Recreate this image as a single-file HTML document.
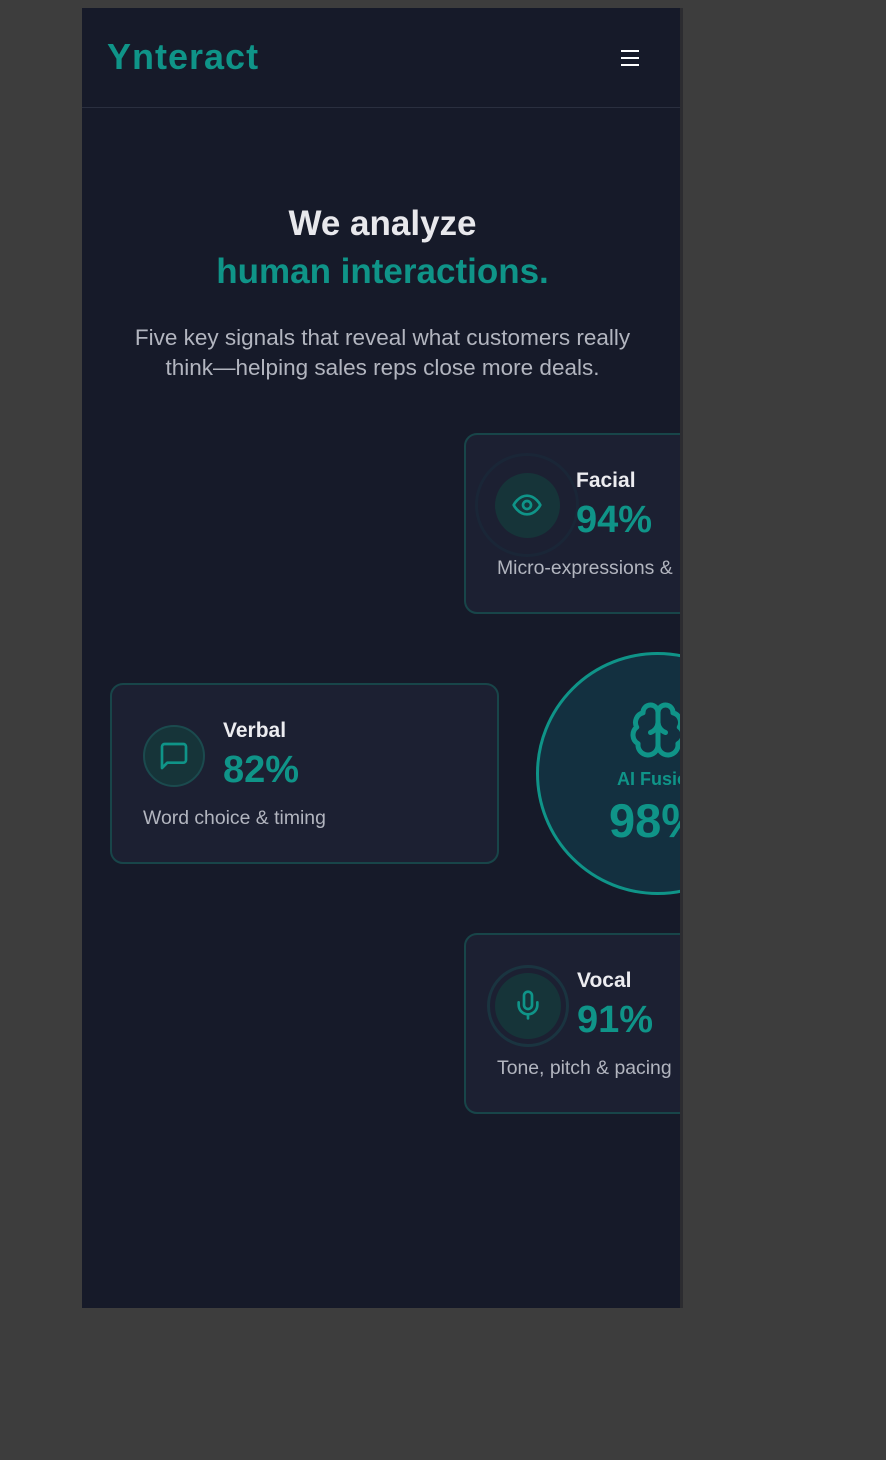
<!DOCTYPE html>
<html><head><meta charset="utf-8"><style>
*{margin:0;padding:0;box-sizing:border-box}
body{width:886px;height:1460px;background:#3d3d3d;position:relative;overflow:hidden;font-family:"Liberation Sans",sans-serif}
#f{position:absolute;left:82px;top:8px;width:601px;height:1300px;background:#161a29;overflow:hidden}
#sb{position:absolute;left:598px;top:0;width:3px;height:1300px;background:#2c2c30;z-index:9}
.hdr{position:absolute;left:0;top:0;width:601px;height:100px;border-bottom:1px solid #2a2f3f}
.logo{position:absolute;left:25px;top:28px;font-size:36px;font-weight:bold;color:#0f9488;letter-spacing:1px}
.menu{position:absolute;left:539px;top:42px;width:18px}
.menu i{display:block;height:2px;background:#fff;margin-bottom:5px}
.t{position:absolute;left:0;width:601px;text-align:center;font-weight:bold;font-size:35px}
.p{position:absolute;left:0;width:601px;text-align:center;font-size:22.5px;line-height:30px;color:#b2b5bf}
.card{position:absolute;background:#1c2032;border:2px solid #184549;border-radius:13px}
.ic{position:absolute;border-radius:50%;background:#163439}
.nm{position:absolute;font-weight:bold;font-size:21px;color:#ececf0}
.pc{position:absolute;font-weight:bold;font-size:38px;color:#0f9488}
.ds{position:absolute;font-size:19.4px;color:#b2b5bf;white-space:nowrap}
svg{position:absolute}
</style></head><body>
<div id="f">
<div id="sb"></div>
<div class="hdr"><div class="logo">Ynteract</div><div class="menu"><i></i><i></i><i></i></div></div>
<div class="t" style="top:196px;color:#e8e8ec">We analyze</div>
<div class="t" style="top:244px;color:#0f9488">human interactions.</div>
<div class="p" style="top:315px">Five key signals that reveal what customers really<br>think—helping sales reps close more deals.</div>

<div class="card" style="left:382px;top:425px;width:260px;height:181px">
 <div class="ic" style="left:9px;top:18px;width:104px;height:104px;background:none;border:3px solid #1a2637"></div>
 <div class="ic" style="left:29px;top:38px;width:65px;height:65px"></div>
 <svg style="left:45px;top:54px" width="32" height="32" viewBox="0 0 24 24" fill="none" stroke="#0f9488" stroke-width="2" stroke-linecap="round" stroke-linejoin="round"><path d="M2 12s3.5-7 10-7 10 7 10 7-3.5 7-10 7S2 12 2 12z"/><circle cx="12" cy="12" r="3"/></svg>
 <div class="nm" style="left:110px;top:34px">Facial</div>
 <div class="pc" style="left:110px;top:64px">94%</div>
 <div class="ds" style="left:31px;top:122px">Micro-expressions &amp;</div>
</div>

<div class="card" style="left:28px;top:675px;width:389px;height:181px">
 <div class="ic" style="left:31px;top:40px;width:62px;height:62px;border:2px solid #1b4a4e"></div>
 <svg style="left:46px;top:55px" width="32" height="32" viewBox="0 0 24 24" fill="none" stroke="#0f9488" stroke-width="2" stroke-linecap="round" stroke-linejoin="round"><path d="M21 15a2 2 0 0 1-2 2H7l-4 4V5a2 2 0 0 1 2-2h14a2 2 0 0 1 2 2z"/></svg>
 <div class="nm" style="left:111px;top:34px">Verbal</div>
 <div class="pc" style="left:111px;top:64px">82%</div>
 <div class="ds" style="left:31px;top:122px">Word choice &amp; timing</div>
</div>

<div style="position:absolute;left:454px;top:644px;width:243px;height:243px;border-radius:50%;border:3px solid #0f9488;background:#133040"></div>
<svg style="left:546px;top:692px" width="60" height="60" viewBox="0 0 24 24" fill="none" stroke="#0f9488" stroke-width="2" stroke-linecap="round" stroke-linejoin="round"><path d="M12 5a3 3 0 1 0-5.997.125 4 4 0 0 0-2.526 5.77 4 4 0 0 0 .556 6.588A4 4 0 1 0 12 18Z"/><path d="M12 5a3 3 0 1 1 5.997.125 4 4 0 0 1 2.526 5.77 4 4 0 0 1-.556 6.588A4 4 0 1 1 12 18Z"/><path d="M15 13a4.5 4.5 0 0 1-3-4 4.5 4.5 0 0 1-3 4"/><path d="M12 5v13"/></svg>
<div style="position:absolute;left:535px;top:761px;font-weight:bold;font-size:18px;color:#0f9488;white-space:nowrap">AI Fusion</div>
<div style="position:absolute;left:527px;top:785px;font-weight:bold;font-size:47px;color:#0f9488;white-space:nowrap">98%</div>

<div class="card" style="left:382px;top:925px;width:260px;height:181px">
 <div class="ic" style="left:21px;top:30px;width:82px;height:82px;background:none;border:3px solid #1a3440"></div>
 <div class="ic" style="left:29px;top:38px;width:66px;height:66px"></div>
 <svg style="left:46px;top:54px" width="32" height="32" viewBox="0 0 24 24" fill="none" stroke="#0f9488" stroke-width="2" stroke-linecap="round" stroke-linejoin="round"><path d="M12 2a3 3 0 0 0-3 3v7a3 3 0 0 0 6 0V5a3 3 0 0 0-3-3z"/><path d="M19 10v2a7 7 0 0 1-14 0v-2"/><path d="M12 19v3"/></svg>
 <div class="nm" style="left:111px;top:34px">Vocal</div>
 <div class="pc" style="left:111px;top:64px">91%</div>
 <div class="ds" style="left:31px;top:122px">Tone, pitch &amp; pacing</div>
</div>
</div>
</body></html>
